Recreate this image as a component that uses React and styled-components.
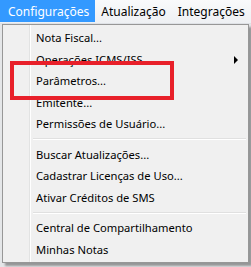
import React from "react";
import styled, { createGlobalStyle } from "styled-components";

const GlobalStyle = createGlobalStyle`
  html, body {
    margin: 0;
    padding: 0;
  }
  body {
    font-family: "Noto Sans", "Open Sans", sans-serif;
    font-size: 11.2px;
    color: #000;
  }
`;

const Screen = styled.div`
  position: relative;
  width: 251px;
  height: 267px;
  overflow: hidden;
  background: #e4e6e8;
`;

const MenuBar = styled.div`
  display: flex;
  height: 23px;
  background: linear-gradient(#f9fafb, #eef0f3);
  border-bottom: 1px solid #dfe2e6;
  font-size: 12px;
`;

const BarItem = styled.div`
  display: flex;
  align-items: center;
  padding: 0 6px;
  height: 22px;
  white-space: nowrap;
  background: ${(p) => (p.active ? "#3399ff" : "transparent")};
  color: ${(p) => (p.active ? "#fff" : "#000")};

  &:first-child {
    padding-left: 8px;
  }
`;

const Dropdown = styled.div`
  position: relative;
  margin-left: 2px;
  width: 241px;
  padding: 2px;
  border: 1px solid #979797;
  background-color: #f0f0f0;
  background-image: linear-gradient(
    to right,
    transparent 26px,
    #e2e3e3 26px,
    #e2e3e3 27px,
    #ffffff 27px,
    #ffffff 28px,
    transparent 28px
  );
  box-shadow: 3px 3px 2px rgba(0, 0, 0, 0.35);
`;

const Item = styled.div`
  position: relative;
  display: flex;
  align-items: center;
  height: 21.5px;
  padding-left: 31px;
  white-space: nowrap;
`;

const Arrow = styled.span`
  position: absolute;
  right: 8px;
  top: 7px;
  width: 0;
  height: 0;
  border-top: 4px solid transparent;
  border-bottom: 4px solid transparent;
  border-left: 4px solid #000;
`;

const Separator = styled.div`
  height: 9px;
  margin-left: 28px;
  display: flex;
  flex-direction: column;
  justify-content: center;

  &::before {
    content: "";
    height: 1px;
    background: #e0e0e0;
  }
  &::after {
    content: "";
    height: 1px;
    background: #ffffff;
  }
`;

const Highlight = styled.div`
  position: absolute;
  left: 10px;
  top: 61px;
  width: 164px;
  height: 39px;
  box-sizing: border-box;
  border: 4.5px solid #e8202a;
  pointer-events: none;
`;

export default function App() {
  return (
    <Screen>
      <GlobalStyle />
      <MenuBar>
        <BarItem active>Configurações</BarItem>
        <BarItem>Atualização</BarItem>
        <BarItem>Integrações</BarItem>
        <BarItem>Suporte</BarItem>
      </MenuBar>
      <Dropdown>
        <Item>Nota Fiscal...</Item>
        <Item>
          Operações ICMS/ISS
          <Arrow />
        </Item>
        <Item>Parâmetros...</Item>
        <Item>Emitente...</Item>
        <Item>Permissões de Usuário...</Item>
        <Separator />
        <Item>Buscar Atualizações...</Item>
        <Item>Cadastrar Licenças de Uso...</Item>
        <Item>Ativar Créditos de SMS</Item>
        <Separator />
        <Item>Central de Compartilhamento</Item>
        <Item>Minhas Notas</Item>
      </Dropdown>
      <Highlight />
    </Screen>
  );
}
